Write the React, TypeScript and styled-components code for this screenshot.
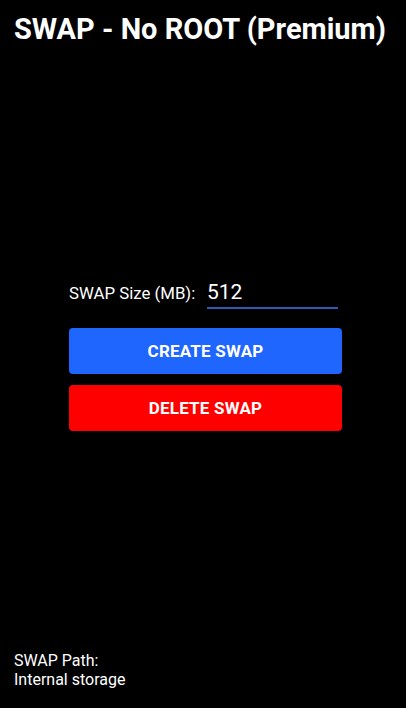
import styled, { createGlobalStyle } from "styled-components";

const GlobalStyle = createGlobalStyle`
  html, body {
    margin: 0;
    padding: 0;
    background: #000;
  }
  body {
    font-family: Roboto, "Liberation Sans", sans-serif;
    color: #fff;
  }
`;

const Screen = styled.div`
  height: 100vh;
  display: flex;
  flex-direction: column;
  background: #000;
`;

const Title = styled.h1`
  margin: 0;
  padding: 12px 14px 0;
  font-size: 29px;
  font-weight: 700;
  line-height: 34px;
  color: #fff;
  white-space: nowrap;
`;

const Main = styled.main`
  flex: 1;
  display: flex;
  align-items: center;
  justify-content: center;
  padding: 10px 0 0 5px;
`;

const Panel = styled.div`
  width: 273px;
  display: flex;
  flex-direction: column;
`;

const SizeRow = styled.div`
  display: flex;
  align-items: flex-end;
  gap: 14px;
  margin-bottom: 19px;
`;

const Label = styled.span`
  width: 124px;
  font-size: 16.8px;
  color: #fff;
  padding-bottom: 6px;
  white-space: nowrap;
`;

const SizeInput = styled.input`
  width: 131px;
  box-sizing: border-box;
  background: transparent;
  border: none;
  border-bottom: 2px solid #2f5bb8;
  outline: none;
  color: #fff;
  font-family: Roboto, "Liberation Sans", sans-serif;
  font-size: 21px;
  padding: 2px 0 2px;
  line-height: 26px;
`;

const Buttons = styled.div`
  display: flex;
  flex-direction: column;
  gap: 11px;
`;

const ActionButton = styled.button<{ $tone: "blue" | "red" }>`
  height: 46px;
  border: none;
  border-radius: 4px;
  background: ${(p) => (p.$tone === "blue" ? "#1f66ff" : "#ff0000")};
  color: #fff;
  font-family: Roboto, "Liberation Sans", sans-serif;
  font-size: 17px;
  font-weight: 700;
  letter-spacing: 0.2px;
  cursor: pointer;
`;

const Footer = styled.footer`
  padding: 0 14px 19px;
  font-size: 16px;
  line-height: 19px;
  color: #fff;
`;

export default function App() {
  return (
    <Screen>
      <GlobalStyle />
      <Title>SWAP - No ROOT (Premium)</Title>
      <Main>
        <Panel>
          <SizeRow>
            <Label>SWAP Size (MB):</Label>
            <SizeInput defaultValue="512" />
          </SizeRow>
          <Buttons>
            <ActionButton $tone="blue">CREATE SWAP</ActionButton>
            <ActionButton $tone="red">DELETE SWAP</ActionButton>
          </Buttons>
        </Panel>
      </Main>
      <Footer>
        <div>SWAP Path:</div>
        <div>Internal storage</div>
      </Footer>
    </Screen>
  );
}
